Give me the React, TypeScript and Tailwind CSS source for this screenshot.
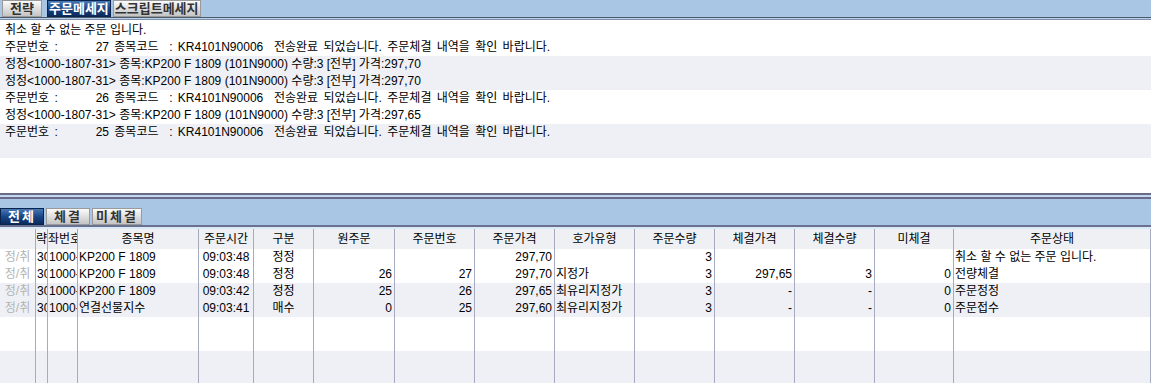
import React from 'react';

const FONT = { fontFamily: '"Liberation Sans", "Noto Sans CJK KR", sans-serif' };

const COLS = 'grid-cols-[36px_12px_30px_121px_55px_60px_81px_80px_80px_80px_80px_80px_80px_79px_197px]';

const HEAD = ['', '략', '좌번호', '종목명', '주문시간', '구분', '원주문', '주문번호', '주문가격', '호가유형', '주문수량', '체결가격', '체결수량', '미체결', '주문상태'];

// 정렬: l=left, c=center, r=right
const ALIGN = ['c', 'l', 'l', 'l', 'c', 'c', 'r', 'r', 'r', 'l', 'r', 'r', 'r', 'r', 'l'];

const ROWS: string[][] = [
  ['정/취', '30', '1000-1807-31', 'KP200 F 1809', '09:03:48', '정정', '', '', '297,70', '', '3', '', '', '', '취소 할 수 없는 주문 입니다.'],
  ['정/취', '30', '1000-1807-31', 'KP200 F 1809', '09:03:48', '정정', '26', '27', '297,70', '지정가', '3', '297,65', '3', '0', '전량체결'],
  ['정/취', '30', '1000-1807-31', 'KP200 F 1809', '09:03:42', '정정', '25', '26', '297,65', '최유리지정가', '3', '-', '-', '0', '주문정정'],
  ['정/취', '30', '1000-1807-31', '연결선물지수', '09:03:41', '매수', '0', '25', '297,60', '최유리지정가', '3', '-', '-', '0', '주문접수'],
  ['', '', '', '', '', '', '', '', '', '', '', '', '', '', ''],
  ['', '', '', '', '', '', '', '', '', '', '', '', '', '', ''],
  ['', '', '', '', '', '', '', '', '', '', '', '', '', '', ''],
  ['', '', '', '', '', '', '', '', '', '', '', '', '', '', ''],
];

function Tab({ label, active, wide }: { label: string; active?: boolean; wide?: boolean }) {
  const base = `h-[17px] flex items-center justify-center text-[13px] font-bold leading-none ${wide ? 'min-w-[44px] px-[3px] tracking-[2px]' : 'min-w-[40px] px-[1px]'}`;
  return active ? (
    <div className={`${base} border border-[#0a2450] bg-gradient-to-b from-[#4878b4] via-[#1a4686] to-[#0b2a5c] text-white`}>
      {label}
    </div>
  ) : (
    <div className={`${base} border border-[#9a9a9a] bg-gradient-to-b from-[#fbfbfb] to-[#c4c4c4] text-[#333333]`}>
      {label}
    </div>
  );
}

function OrderLine({ no }: { no: string }) {
  return (
    <span className="[word-spacing:2px]">
      <span className="inline-block w-[68px]">주문번호 :</span>
      <span className="inline-block w-[36px] text-right">{no}</span>
      {' 종목코드  : KR4101N90006  전송완료 되었습니다. 주문체결 내역을 확인 바랍니다.'}
    </span>
  );
}

const LOG: React.ReactNode[] = [
  '취소 할 수 없는 주문 입니다.',
  <OrderLine no="27" />,
  '정정<1000-1807-31> 종목:KP200 F 1809 (101N9000) 수량:3 [전부] 가격:297,70',
  '정정<1000-1807-31> 종목:KP200 F 1809 (101N9000) 수량:3 [전부] 가격:297,70',
  <OrderLine no="26" />,
  '정정<1000-1807-31> 종목:KP200 F 1809 (101N9000) 수량:3 [전부] 가격:297,65',
  <OrderLine no="25" />,
  '',
  '',
  '',
];

export default function App() {
  return (
    <div className="w-[1151px] h-[383px] overflow-hidden bg-white text-black text-[12px]" style={FONT}>
      {/* 상단 탭 */}
      <div className="h-[17px] flex items-start gap-[2px] pl-[2px] bg-[#a9c6e4]">
        <Tab label="전략" />
        <div className="w-[1px]" />
        <Tab label="주문메세지" active />
        <Tab label="스크립트메세지" />
      </div>
      <div className="h-[1px] bg-[#4a5a6a]" />
      <div className="h-[1px] bg-[#b8d0ea]" />
      <div className="h-[1px] bg-[#8090a8]" />

      {/* 메세지 로그 */}
      <div className="h-[173px] overflow-hidden pt-[2px]">
        {LOG.map((l, i) => (
          <div key={i} className={`h-[17px] leading-[17px] pl-[5px] whitespace-pre ${Math.floor(i / 2) % 2 === 1 ? 'bg-[#eef0f5]' : 'bg-white'}`}>
            {l}
          </div>
        ))}
      </div>

      {/* 스플리터 */}
      <div className="h-[2px] bg-[#6a6a8a]" />
      <div className="h-[2px] bg-[#c4d8ee]" />
      <div className="h-[2px] bg-[#6a6a8a]" />

      {/* 하단 탭 */}
      <div className="h-[26px] flex items-end gap-[2px] bg-[#a9c6e4]">
        <Tab label="전체" active wide />
        <Tab label="체결" wide />
        <Tab label="미체결" wide />
        <div className="flex-1" />
      </div>
      <div className="h-[2px] bg-[#6a7090]" />
      <div className="h-[2px] bg-[#dbe8f6]" />

      {/* 그리드 */}
      <div className={`grid ${COLS} h-[20px] bg-[#eef0f4]`}>
        {HEAD.map((h, i) => (
          <div key={i} className={`border-r border-[#a6abc0] overflow-hidden whitespace-nowrap leading-[20px] ${i === 1 || i === 2 ? 'text-left' : 'text-center'}`}>
            {h}
          </div>
        ))}
      </div>
      {ROWS.map((r, ri) => (
        <div key={ri} className={`grid ${COLS} h-[17px] ${Math.floor(ri / 2) % 2 === 1 ? 'bg-[#eef0f5]' : 'bg-white'}`}>
          {r.map((c, ci) => (
            <div
              key={ci}
              className={`border-r border-[#a6abc0] overflow-hidden whitespace-nowrap leading-[17px] ${
                ALIGN[ci] === 'r' ? 'text-right pr-[2px]' : ALIGN[ci] === 'c' ? 'text-center' : 'text-left pl-[1px]'
              } ${ci === 0 ? 'text-[#b4b4b4]' : ''}`}
            >
              {c}
            </div>
          ))}
        </div>
      ))}
    </div>
  );
}
